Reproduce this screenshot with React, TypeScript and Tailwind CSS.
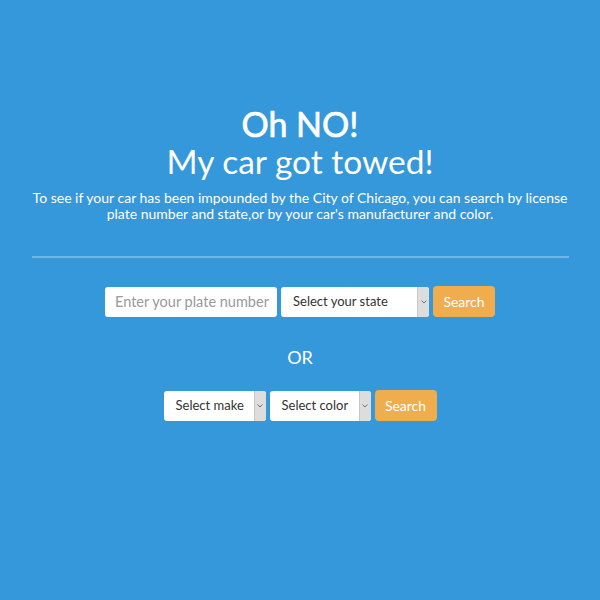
import React from 'react';

const Chevron = () => (
  <svg width="6" height="4" viewBox="0 0 6 4" className="text-gray-500">
    <path d="M0.5 0.5 L3 3 L5.5 0.5" fill="none" stroke="currentColor" strokeWidth="1" />
  </svg>
);

// Fake select box with the grey arrow strip on the right
const SelectBox = ({ label, width }: { label: string; width: string }) => (
  <div className={`flex h-[30px] ${width} items-stretch overflow-hidden rounded-[3px] bg-white`}>
    <div className="flex flex-1 items-center pl-[12px] text-[13px] text-[#333]">{label}</div>
    <div className="flex w-[12px] items-center justify-center border-l border-[#c8c8c8] bg-[#dddddd]">
      <Chevron />
    </div>
  </div>
);

const SearchButton = () => (
  <button className="h-[31px] w-[62px] rounded-[4px] bg-[#f0ad4e] text-[14px] text-white">Search</button>
);

export default function App() {
  return (
    <div
      className="flex h-[600px] w-[600px] flex-col items-center bg-[#3498db] text-white"
      style={{ fontFamily: 'Lato, "Open Sans", sans-serif' }}
    >
      <h1 className="mt-[106px] text-[34px] leading-[36px] [-webkit-text-stroke:0.7px_white]">Oh NO!</h1>
      <h2 className="mt-[1px] text-[33.5px] leading-[36px]">My car got towed!</h2>
      <p className="mt-[11px] w-[560px] text-center text-[14px] leading-[16px]">
        To see if your car has been impounded by the City of Chicago, you can search by license plate number and
        state,or by your car's manufacturer and color.
      </p>
      <div className="mt-[34px] h-[2px] w-[537px] bg-white/30" />
      <div className="mt-[28px] flex items-center gap-[4px]">
        <input
          placeholder="Enter your plate number"
          className="h-[30px] w-[172px] rounded-[3px] bg-white pl-[10px] pr-[2px] text-[14.5px] text-[#333] outline-none placeholder:text-[#999]"
        />
        <SelectBox label="Select your state" width="w-[148px]" />
        <SearchButton />
      </div>
      <div className="mt-[30px] text-[18px] leading-[20px]">OR</div>
      <div className="mt-[23px] flex items-center gap-[4px]">
        <SelectBox label="Select make" width="w-[102px]" />
        <SelectBox label="Select color" width="w-[101px]" />
        <SearchButton />
      </div>
    </div>
  );
}
